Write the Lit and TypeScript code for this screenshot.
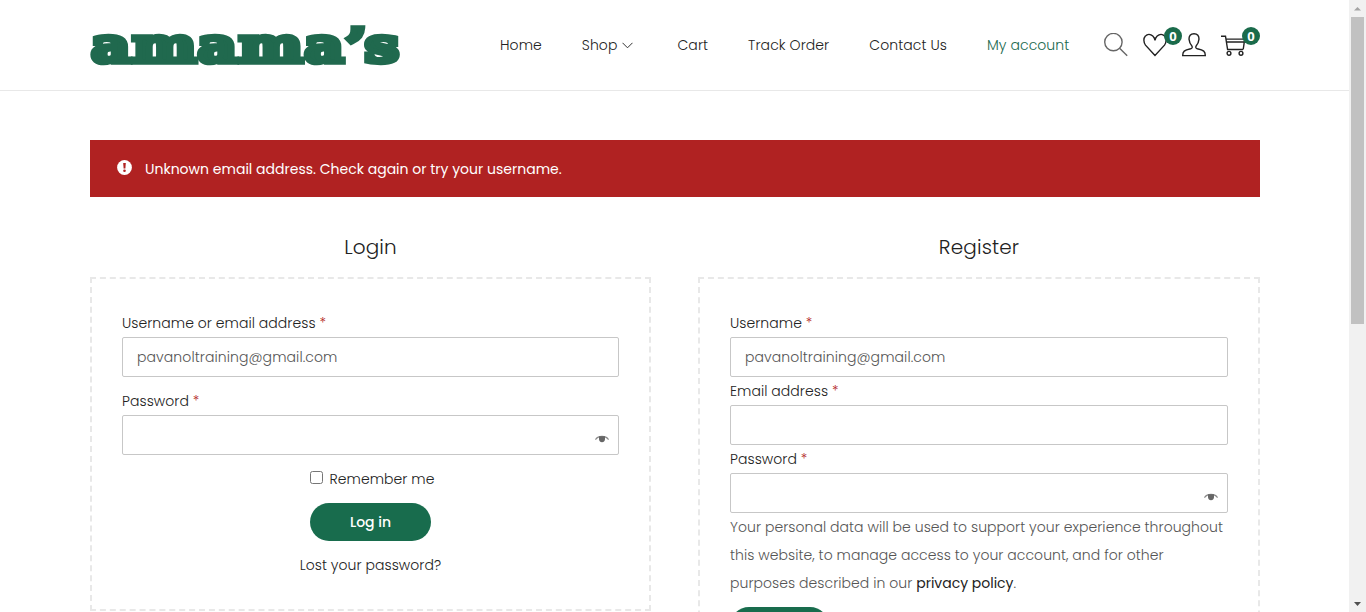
import { LitElement, html, css } from "lit";
import { customElement } from "lit/decorators.js";

const eye = html`<svg class="eye" width="14" height="8" viewBox="0 0 14 8">
  <path d="M.4 4.600C2 2.400 4.300 1.400 7 1.400s5 1 6.600 3.200" fill="none" stroke="#888" stroke-width="1.200" />
  <path d="M4 1.200h6v2.600a3 3.400 0 0 1-6 0z" fill="#666" />
</svg>`;

@customElement("app-root")
class AppRoot extends LitElement {
  static styles = css`
    :host {
      display: flex;
      height: 612px;
      overflow: hidden;
      background: #fff;
      color: #222;
      font: 300 14px/28px Poppins, Inter, "Open Sans", sans-serif;
      letter-spacing: 0.05px;
    }
    * { box-sizing: border-box; }
    svg { display: block; }
    .page { flex: 1; min-width: 0; }
    .header {
      display: flex;
      align-items: center;
      height: 91px;
      padding: 0 89px 0 90px;
      border-bottom: 1px solid #e8e8e8;
    }
    .logo { width: 310px; height: 50px; margin-right: 100px; overflow: visible; }
    .logo text {
      font-family: "DejaVu Serif", serif;
      font-weight: 700;
      font-size: 49px;
      letter-spacing: 0;
      fill: #20694e;
      stroke: #20694e;
      stroke-width: 5.500px;
      stroke-linejoin: miter;
      stroke-miterlimit: 2;
    }
    .nav { display: flex; gap: 40px; white-space: nowrap; letter-spacing: 0.080px; }
    .shop { display: flex; align-items: center; gap: 5px; margin-right: 4px; }
    .current { color: #20694e; }
    .icons { display: flex; gap: 15px; margin-left: auto; padding-right: 15px; }
    .icon { position: relative; width: 24px; height: 24px; }
    .badge {
      position: absolute;
      left: 21px;
      top: -6px;
      width: 18px;
      height: 18px;
      border-radius: 50%;
      background: #1a6b4b;
      color: #fff;
      font: 700 13px/18px "Open Sans", sans-serif;
      text-align: center;
    }
    .main { padding: 49px 89px 0 90px; }
    .alert {
      display: flex;
      align-items: center;
      gap: 13px;
      height: 57px;
      padding-left: 27px;
      background: #b02222;
      color: #fff;
      font-weight: 400;
      letter-spacing: 0.010px;
    }
    .alert svg { margin-bottom: 2px; }
    .columns { display: grid; grid-template-columns: 561px 562px; gap: 47px; margin-top: 36px; }
    .title {
      margin: 0;
      text-align: center;
      font-size: 20px;
      font-weight: 300;
      line-height: 28px;
      letter-spacing: 0.150px;
    }
    .panel { margin-top: 16px; padding: 30px; border: 2px dashed #e8e8e8; }
    .login { height: 334px; }
    .label { height: 28px; }
    .star { color: #b22222; }
    .field {
      display: flex;
      align-items: center;
      height: 40px;
      padding: 0 14px;
      border: 1px solid #c7c7c7;
      border-radius: 2px;
      color: #555;
      letter-spacing: 0.090px;
    }
    .spaced { margin-bottom: 10px; }
    .secret { justify-content: flex-end; padding: 7px 9px 0 0; }
    .remember { display: flex; align-items: center; justify-content: center; gap: 7px; height: 28px; padding-left: 3px; }
    .box { width: 13px; height: 13px; margin-bottom: 3px; border: 1px solid #767676; border-radius: 2.500px; }
    .button {
      display: flex;
      align-items: center;
      justify-content: center;
      height: 38px;
      border-radius: 19px;
      background: #186c4d;
      color: #fff;
      font-weight: 500;
      letter-spacing: 0;
    }
    .signin { width: 121px; margin: 10px auto; }
    .signup { width: 99px; margin-top: 10px; }
    .lost { text-align: center; }
    .note { margin: 0; color: #555; }
    .link { color: #222; font-weight: 400; letter-spacing: 0; }
    .scrollbar {
      display: flex;
      flex-direction: column;
      align-items: center;
      justify-content: space-between;
      width: 17px;
      background: #f1f1f1;
    }
    .track { flex: 1; }
    .thumb { width: 13px; height: 307px; background: #c1c1c1; }
    .arrow { width: 17px; height: 17px; }
  `;

  label(text: string) {
    return html`<div class="label">${text} <span class="star">*</span></div>`;
  }

  render() {
    return html`
      <div class="page">
        <header class="header">
          <svg class="logo" viewBox="0 0 310 50">
            <text transform="scale(1.24 1)" x="1 34 87 120 173 206 221.5" y="42.300 42.300 42.300 42.300 42.300 44.300 42.300">amama’s</text>
          </svg>
          <nav class="nav">
            <span>Home</span>
            <span class="shop">Shop
              <svg width="11" height="7" viewBox="0 0 11 7"><path d="M.5.8l5 5 5-5" fill="none" stroke="#333" /></svg>
            </span>
            <span>Cart</span>
            <span>Track Order</span>
            <span>Contact Us</span>
            <span class="current">My account</span>
          </nav>
          <div class="icons">
            <div class="icon">
              <svg width="24" height="24" viewBox="0 0 24 24" fill="none" stroke="#666" stroke-width="1.400">
                <circle cx="9.400" cy="9.100" r="8.700" /><path d="M15.600 15.300l7.600 7.400" />
              </svg>
            </div>
            <div class="icon">
              <svg width="24" height="24" viewBox="0 0 24 24" fill="none" stroke="#222" stroke-width="1.400">
                <path d="M12 22.500L2.500 12.100C.4 9.200.3 5.300 2.400 3.100c2-2.200 5.200-2 7.400 0C11 4.200 11.700 5.700 12 7.300c.3-1.600 1-3.100 2.200-4.200 2.200-2 5.400-2.200 7.400 0 2.100 2.200 2 6.100-.1 9z" />
              </svg>
              <span class="badge">0</span>
            </div>
            <div class="icon">
              <svg width="24" height="24" viewBox="0 -.3 24 24" fill="none" stroke="#222" stroke-width="1.400">
                <path d="M.7 22.300c0-4.400 1.500-5.300 8-6.800 1.700-.5 1.800-1.700 1.200-2.700C8.200 11 7.300 8.600 7 5.900 6.900 2.600 8.500.4 12 .4s5.100 2.200 5 5.500c-.3 2.700-1.200 5.100-2.900 6.900-.6 1-.5 2.200 1.200 2.700 6.500 1.500 8 2.400 8 6.800z" />
              </svg>
            </div>
            <div class="icon">
              <svg width="24" height="24" viewBox="0 0 24 24" fill="none" stroke="#222" stroke-width="1.400">
                <path d="M0 3.200h4.500L6.600 16.500H22M5 6.100h19M5.200 9h18.300M22.200 16.500l1.500-10.400" />
                <circle cx="8" cy="20.300" r="1.900" /><circle cx="20" cy="20.300" r="1.900" />
              </svg>
              <span class="badge">0</span>
            </div>
          </div>
        </header>
        <main class="main">
          <div class="alert" role="alert">
            <svg width="15" height="15" viewBox="0 0 15 15">
              <circle cx="7.500" cy="7.500" r="7.400" fill="#fff" />
              <path d="M6.200 3h2.600l-.4 5.400H6.600z" fill="#b02222" /><circle cx="7.500" cy="10.800" r="1.300" fill="#b02222" />
            </svg>
            <span>Unknown email address. Check again or try your username.</span>
          </div>
          <div class="columns">
            <section>
              <h2 class="title">Login</h2>
              <div class="panel login">
                ${this.label("Username or email address")}
                <div class="field spaced">pavanoltraining@gmail.com</div>
                ${this.label("Password")}
                <div class="field secret spaced">${eye}</div>
                <div class="remember"><span class="box"></span>Remember me</div>
                <div class="button signin">Log in</div>
                <div class="lost">Lost your password?</div>
              </div>
            </section>
            <section>
              <h2 class="title">Register</h2>
              <div class="panel">
                ${this.label("Username")}
                <div class="field">pavanoltraining@gmail.com</div>
                ${this.label("Email address")}
                <div class="field"></div>
                ${this.label("Password")}
                <div class="field secret">${eye}</div>
                <p class="note">
                  Your personal data will be used to support your experience throughout this website, to manage
                  access to your account, and for other purposes described in our
                  <span class="link">privacy policy</span>.
                </p>
                <div class="button signup"></div>
              </div>
            </section>
          </div>
        </main>
      </div>
      <div class="scrollbar">
        <svg class="arrow" viewBox="0 0 17 17"><path d="M5 10.500h7L8.500 7z" fill="#a3a3a3" /></svg>
        <div class="thumb"></div>
        <div class="track"></div>
        <svg class="arrow" viewBox="0 0 17 17"><path d="M5 7h7l-3.500 4z" fill="#505050" /></svg>
      </div>
    `;
  }
}
